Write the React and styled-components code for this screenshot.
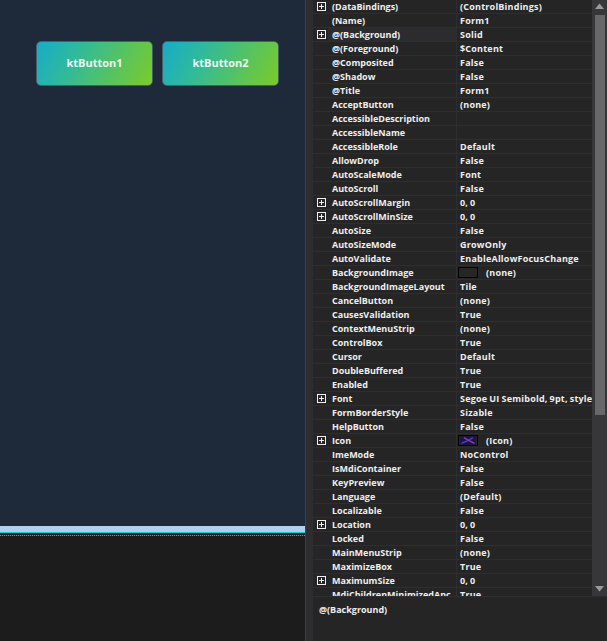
import React from "react";
import styled, { createGlobalStyle } from "styled-components";

const GlobalStyle = createGlobalStyle`
  html, body {
    margin: 0;
    padding: 0;
    background: #252526;
    overflow: hidden;
  }
`;

const Window = styled.div`
  display: flex;
  width: 607px;
  height: 641px;
  overflow: hidden;
  font-family: "Open Sans", "Liberation Sans", sans-serif;
`;

const Designer = styled.div`
  width: 305px;
  display: flex;
  flex-direction: column;
  flex-shrink: 0;
`;

const FormSurface = styled.div`
  height: 526px;
  background: #1e2a3a;
  padding: 41px 0 0 36px;
  box-sizing: border-box;
  display: flex;
  gap: 9px;
  align-items: flex-start;
`;

const KtButton = styled.div`
  width: 117px;
  height: 45px;
  box-sizing: border-box;
  border-radius: 5px;
  border: 1px solid #46606a;
  padding-bottom: 2px;
  background: linear-gradient(118deg, #17abc9 0%, #2fba9c 32%, #58c35e 68%, #7ccb28 100%);
  color: #eef6f2;
  font-size: 11px;
  font-weight: 700;
  display: flex;
  align-items: center;
  justify-content: center;
`;

const FormEdge = styled.div`
  height: 6px;
  background: #b3d0ee;
`;

const SelectionLine = styled.div`
  height: 1px;
  background: #10cfe0;
`;

const TrayGap = styled.div`
  height: 2px;
  background: #1c1c1c;
`;

const DottedLine = styled.div`
  height: 1px;
  background: repeating-linear-gradient(90deg, #8a8a8a 0 1px, #2c2c2c 1px 2px);
`;

const Tray = styled.div`
  flex: 1;
  background: #1c1c1c;
`;

const Splitter = styled.div`
  width: 8px;
  flex-shrink: 0;
  background: #2d2d30;
  border-left: 1px solid #3f3f42;
  box-sizing: border-box;
`;

const PropertiesPane = styled.div`
  flex: 1;
  display: flex;
  flex-direction: column;
  min-width: 0;
  background: #252526;
`;

const GridArea = styled.div`
  height: 597px;
  display: flex;
  flex-shrink: 0;
  border-bottom: 1px solid #2f2f31;
  box-sizing: border-box;
`;

const PropertyList = styled.div`
  flex: 1;
  min-width: 0;
  overflow: hidden;
`;

const Row = styled.div`
  display: flex;
  height: 14px;
  box-sizing: border-box;
  border-bottom: 1px solid #2e2e30;
  align-items: center;
  color: #efefef;
  font-size: 9px;
  font-weight: 700;
  line-height: 13px;
  white-space: nowrap;
  &:first-child {
    padding-bottom: 1px;
  }
`;

const Gutter = styled.div`
  width: 15px;
  flex-shrink: 0;
  display: flex;
  align-items: center;
  justify-content: center;
  padding-left: 1px;
  box-sizing: border-box;
`;

const NameCell = styled.div`
  width: 129px;
  height: 100%;
  flex-shrink: 0;
  padding-left: 4px;
  box-sizing: border-box;
  overflow: hidden;
  border-right: 1px solid #2e2e30;
  background: ${(p) => (p.$selected ? "#2c2c2e" : "transparent")};
`;

const ValueCell = styled.div`
  flex: 1;
  min-width: 0;
  padding-left: 3px;
  overflow: hidden;
  display: flex;
  align-items: center;
  gap: 8px;
  letter-spacing: 0.22px;
  word-spacing: -0.6px;
`;

const ExpandBox = styled.svg`
  width: 9px;
  height: 9px;
  display: block;
`;

const Swatch = styled.span`
  width: 20px;
  height: 11px;
  flex-shrink: 0;
  margin-left: -2px;
  border: 1px solid #050505;
  box-sizing: border-box;
  background: #262626;
  display: block;
`;

const Scrollbar = styled.div`
  width: 15px;
  flex-shrink: 0;
  background: #37373a;
  display: flex;
  flex-direction: column;
  align-items: center;
`;

const ScrollArrow = styled.svg`
  width: 15px;
  height: 15px;
  flex-shrink: 0;
  display: block;
`;

const ScrollThumb = styled.div`
  width: 10px;
  height: 400px;
  background: #686868;
`;

const ScrollTrack = styled.div`
  flex: 1;
`;

const Description = styled.div`
  flex: 1;
  padding: 6px 0 0 6px;
  color: #efefef;
  font-size: 9px;
  font-weight: 700;
`;

const props = [
  { name: "(DataBindings)", value: "(ControlBindings)", expand: true },
  { name: "(Name)", value: "Form1" },
  { name: "@(Background)", value: "Solid", expand: true, selected: true },
  { name: "@(Foreground)", value: "$Content" },
  { name: "@Composited", value: "False" },
  { name: "@Shadow", value: "False" },
  { name: "@Title", value: "Form1" },
  { name: "AcceptButton", value: "(none)" },
  { name: "AccessibleDescription", value: "" },
  { name: "AccessibleName", value: "" },
  { name: "AccessibleRole", value: "Default" },
  { name: "AllowDrop", value: "False" },
  { name: "AutoScaleMode", value: "Font" },
  { name: "AutoScroll", value: "False" },
  { name: "AutoScrollMargin", value: "0, 0", expand: true },
  { name: "AutoScrollMinSize", value: "0, 0", expand: true },
  { name: "AutoSize", value: "False" },
  { name: "AutoSizeMode", value: "GrowOnly" },
  { name: "AutoValidate", value: "EnableAllowFocusChange" },
  { name: "BackgroundImage", value: "(none)", swatch: "empty" },
  { name: "BackgroundImageLayout", value: "Tile" },
  { name: "CancelButton", value: "(none)" },
  { name: "CausesValidation", value: "True" },
  { name: "ContextMenuStrip", value: "(none)" },
  { name: "ControlBox", value: "True" },
  { name: "Cursor", value: "Default" },
  { name: "DoubleBuffered", value: "True" },
  { name: "Enabled", value: "True" },
  { name: "Font", value: "Segoe UI Semibold, 9pt, style", expand: true },
  { name: "FormBorderStyle", value: "Sizable" },
  { name: "HelpButton", value: "False" },
  { name: "Icon", value: "(Icon)", expand: true, swatch: "icon" },
  { name: "ImeMode", value: "NoControl" },
  { name: "IsMdiContainer", value: "False" },
  { name: "KeyPreview", value: "False" },
  { name: "Language", value: "(Default)" },
  { name: "Localizable", value: "False" },
  { name: "Location", value: "0, 0", expand: true },
  { name: "Locked", value: "False" },
  { name: "MainMenuStrip", value: "(none)" },
  { name: "MaximizeBox", value: "True" },
  { name: "MaximumSize", value: "0, 0", expand: true },
  { name: "MdiChildrenMinimizedAnc", value: "True" },
];

const Expand = () => (
  <ExpandBox viewBox="0 0 9 9">
    <rect x="0.5" y="0.5" width="8" height="8" fill="none" stroke="#f0f0f0" />
    <path d="M2 4.5h5M4.5 2v5" stroke="#f0f0f0" />
  </ExpandBox>
);

const IconSwatch = () => (
  <Swatch as="svg" viewBox="0 0 20 11">
    <rect width="20" height="11" fill="#1e1638" />
    <path d="M2 9L9 6L16 2" stroke="#4a3fe0" strokeWidth="1.5" fill="none" />
    <path d="M5 2L12 6L18 9" stroke="#8a3fc4" strokeWidth="1.5" fill="none" />
  </Swatch>
);

const App = () => {
  return (
    <Window>
      <GlobalStyle />
      <Designer>
        <FormSurface>
          <KtButton>ktButton1</KtButton>
          <KtButton>ktButton2</KtButton>
        </FormSurface>
        <FormEdge />
        <SelectionLine />
        <TrayGap />
        <DottedLine />
        <Tray />
      </Designer>
      <Splitter />
      <PropertiesPane>
        <GridArea>
          <PropertyList>
            {props.map((p) => (
              <Row key={p.name}>
                <Gutter>{p.expand && <Expand />}</Gutter>
                <NameCell $selected={p.selected}>{p.name}</NameCell>
                <ValueCell>
                  {p.swatch === "empty" && <Swatch />}
                  {p.swatch === "icon" && <IconSwatch />}
                  {p.value}
                </ValueCell>
              </Row>
            ))}
          </PropertyList>
          <Scrollbar>
            <ScrollArrow viewBox="0 0 15 15">
              <path d="M3 9L7.5 3.5L12 9Z" fill="#9a9a9a" />
            </ScrollArrow>
            <ScrollThumb />
            <ScrollTrack />
            <ScrollArrow viewBox="0 0 15 15">
              <path d="M3 5L7.5 10.5L12 5Z" fill="#9a9a9a" />
            </ScrollArrow>
          </Scrollbar>
        </GridArea>
        <Description>@(Background)</Description>
      </PropertiesPane>
    </Window>
  );
};

export default App;
